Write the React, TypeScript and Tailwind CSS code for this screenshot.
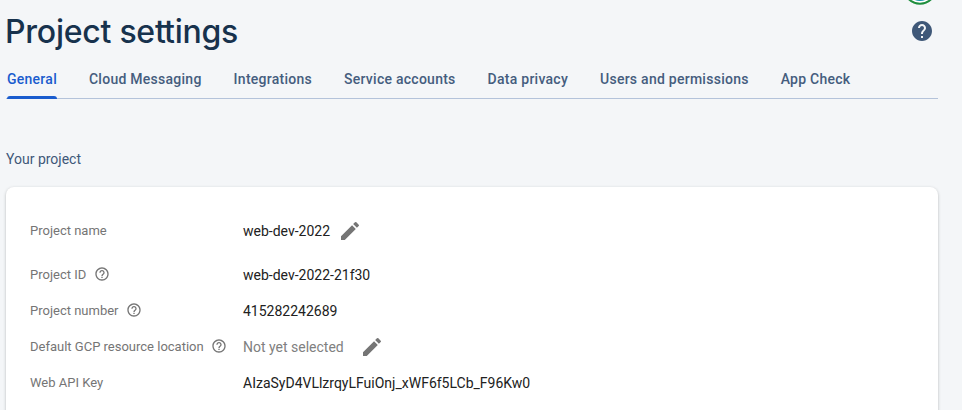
import type { ReactNode } from "react";
import { MdEdit, MdHelp, MdHelpOutline } from "react-icons/md";

const tabs = [
  "General",
  "Cloud Messaging",
  "Integrations",
  "Service accounts",
  "Data privacy",
  "Users and permissions",
  "App Check",
];

type RowProps = {
  label: string;
  help?: boolean;
  tall?: boolean;
  children: ReactNode;
};

function Row({ label, help, tall, children }: RowProps) {
  return (
    <div className={`flex items-center ${tall ? "h-[52px]" : "h-9"}`}>
      <div className="flex w-[213px] shrink-0 items-center text-[13px] text-[#757575]">
        <span className="whitespace-nowrap">{label}</span>
        {help && <MdHelpOutline className="mb-0.5 ml-[7.5px] size-4" />}
      </div>
      <div className="flex items-center text-sm text-[#212121]">{children}</div>
    </div>
  );
}

export default function App() {
  return (
    <div className="h-[410px] w-[962px] overflow-hidden bg-[#f4f6f8] pr-6 pl-1.5 font-[Roboto,sans-serif]">
      <header className="relative flex h-[60px] items-start justify-between">
        <h1 className="-ml-px mt-3 font-[Inter,sans-serif] text-[32px] leading-10 font-medium tracking-[-0.25px] whitespace-nowrap text-[#17324d]">
          Project se<span className="tracking-[-1.75px]">t</span>tings
        </h1>
        <MdHelp className="mt-[19px] mr-1 size-6 text-[#3f5878]" />
        <svg className="absolute top-0 right-0 h-2 w-9" viewBox="0 0 36 8">
          <circle cx="18" cy="-12.5" r="16.2" fill="#fff" stroke="#1e8e3e" strokeWidth="2" />
          <circle cx="18" cy="-12.5" r="13.5" fill="#1593a8" />
        </svg>
      </header>

      <nav className="flex h-[39px] gap-8 border-b border-[#b4c3da] pl-px">
        {tabs.map((tab, i) => (
          <div
            key={tab}
            className={`relative pt-[9px] text-sm leading-5 font-medium tracking-[0.26px] whitespace-nowrap ${
              i === 0 ? "text-[#1a5cce]" : "text-[#455d7e]"
            }`}
          >
            {tab}
            {i === 0 && (
              <span className="absolute -bottom-px left-0 h-[3px] w-full rounded-t-[3px] bg-[#1a5cce]" />
            )}
          </div>
        ))}
      </nav>

      <h2 className="mt-[50px] text-sm leading-5 text-[#3f5878]">Your project</h2>

      <section className="mt-[18px] h-[240px] rounded-lg bg-white pt-[18px] pl-6 shadow-[0_1px_3px_rgba(60,64,67,0.35)]">
        <Row label="Project name" tall>
          web-dev-2022
          <MdEdit className="ml-2 size-6 text-[#757575]" />
        </Row>
        <Row label="Project ID" help>
          web-dev-2022-21f30
        </Row>
        <Row label="Project number" help>
          415282242689
        </Row>
        <Row label="Default GCP resource location" help>
          <span className="text-[#808080]">Not yet selected</span>
          <MdEdit className="ml-4 size-6 text-[#757575]" />
        </Row>
        <Row label="Web API Key">AIzaSyD4VLlzrqyLFuiOnj_xWF6f5LCb_F96Kw0</Row>
      </section>
    </div>
  );
}
